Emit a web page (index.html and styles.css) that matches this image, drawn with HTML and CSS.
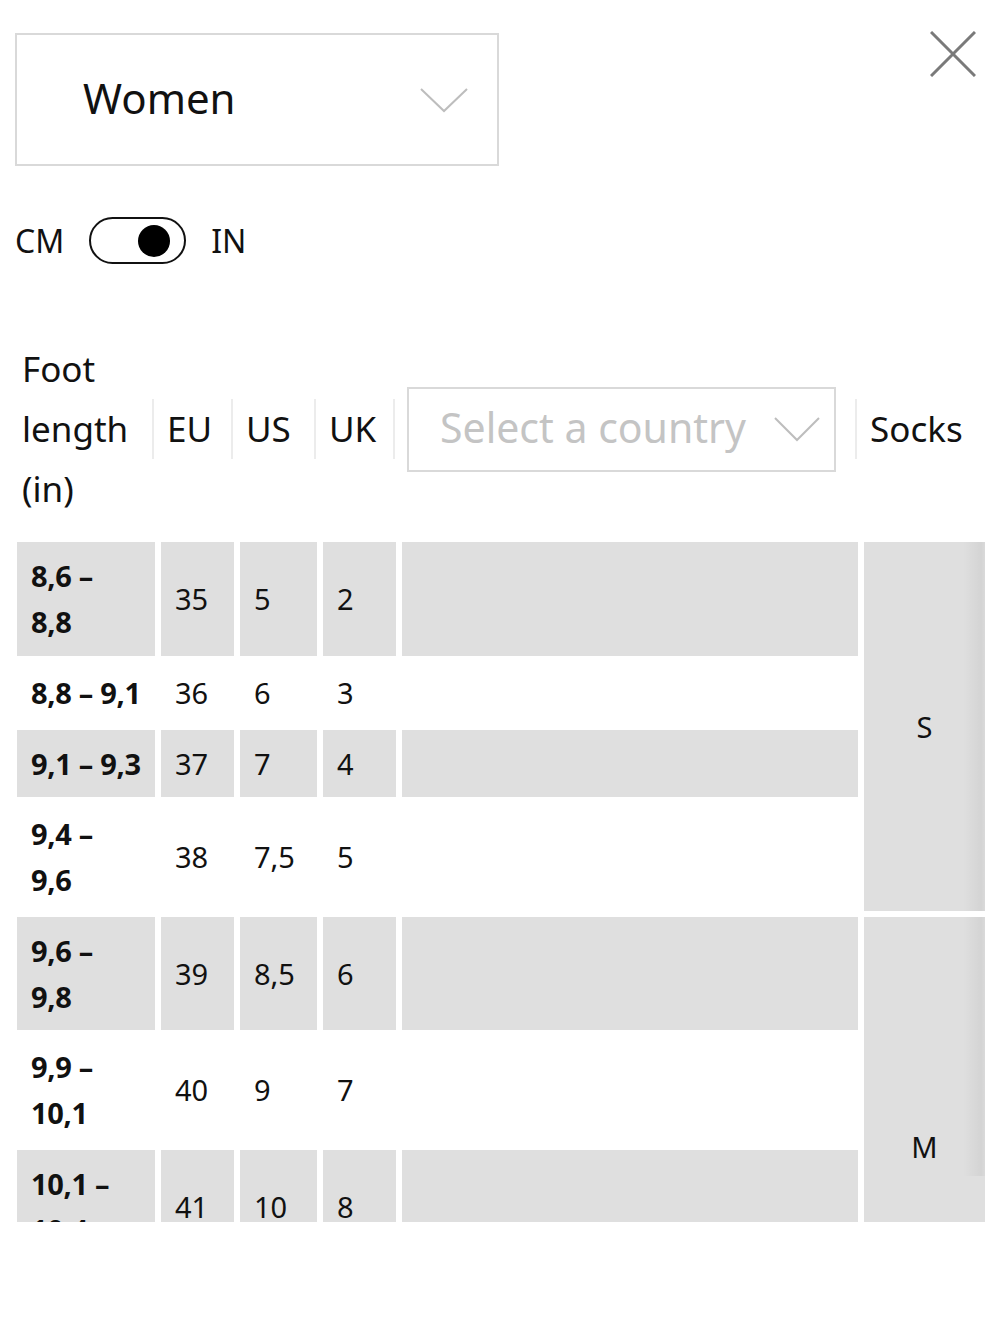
FILE: index.html
```html
<!DOCTYPE html>
<html lang="en">
<head>
<meta charset="utf-8">
<title>Size guide</title>
<link rel="stylesheet" href="styles.css">
</head>
<body>
<div class="page">
  <div class="top">
    <div class="dropdown">
      <span class="dropdown-label">Women</span>
      <svg class="chev" width="48" height="26" viewBox="0 0 48 26"><path d="M1 2 L24 24 L47 2" fill="none" stroke="#bdbdbd" stroke-width="2"/></svg>
    </div>
    <svg class="close" width="46" height="46" viewBox="0 0 46 46"><path d="M1 1 L45 45 M45 1 L1 45" stroke="#7a7a7a" stroke-width="3" fill="none"/></svg>
  </div>

  <div class="units">
    <span class="unit">CM</span>
    <span class="toggle"><span class="knob"></span></span>
    <span class="unit">IN</span>
  </div>

  <div class="grid head">
    <div class="hcell hfirst">Foot<br>length<br>(in)</div>
    <div class="hcell">EU</div>
    <div class="hcell">US</div>
    <div class="hcell">UK</div>
    <div class="hcell hselect">
      <div class="select">
        <span class="select-label">Select a country</span>
        <svg class="chev" width="46" height="26" viewBox="0 0 46 26"><path d="M1 2 L23 24 L45 2" fill="none" stroke="#bdbdbd" stroke-width="2"/></svg>
      </div>
    </div>
    <div class="hcell hlast">Socks</div>
  </div>

  <div class="scroll">
    <div class="grid body">
      <div class="c len g">8,6 –<br>8,8</div>
      <div class="c g">35</div>
      <div class="c g">5</div>
      <div class="c g">2</div>
      <div class="c g"></div>
      <div class="c sock sock-s">S</div>

      <div class="c len">8,8 – 9,1</div>
      <div class="c">36</div>
      <div class="c">6</div>
      <div class="c">3</div>
      <div class="c"></div>

      <div class="c len g">9,1 – 9,3</div>
      <div class="c g">37</div>
      <div class="c g">7</div>
      <div class="c g">4</div>
      <div class="c g"></div>

      <div class="c len">9,4 –<br>9,6</div>
      <div class="c">38</div>
      <div class="c">7,5</div>
      <div class="c">5</div>
      <div class="c"></div>

      <div class="c len g">9,6 –<br>9,8</div>
      <div class="c g">39</div>
      <div class="c g">8,5</div>
      <div class="c g">6</div>
      <div class="c g"></div>
      <div class="c sock sock-m">M</div>

      <div class="c len">9,9 –<br>10,1</div>
      <div class="c">40</div>
      <div class="c">9</div>
      <div class="c">7</div>
      <div class="c"></div>

      <div class="c len g">10,1 –<br>10,4</div>
      <div class="c g">41</div>
      <div class="c g">10</div>
      <div class="c g">8</div>
      <div class="c g"></div>
    </div>
  </div>
</div>
</body>
</html>
```

FILE: styles.css
```css
html, body {
  margin: 0;
  padding: 0;
  background: #fff;
}
body {
  font-family: "Noto Sans", "Open Sans", sans-serif;
  color: #111;
}
.page {
  padding: 0 15px;
}
.top {
  display: flex;
  justify-content: space-between;
  align-items: flex-start;
}
.dropdown {
  margin-top: 33px;
  width: 484px;
  height: 133px;
  box-sizing: border-box;
  border: 2px solid #d9d9d9;
  display: flex;
  align-items: center;
  justify-content: space-between;
  padding: 0 29px 0 66px;
}
.dropdown-label {
  font-size: 42px;
  line-height: 1;
  margin-top: -4px;
}
.close {
  margin-top: 31px;
  margin-right: 9px;
}
.units {
  margin-top: 51px;
  display: flex;
  align-items: center;
  gap: 25px;
}
.unit {
  font-size: 32px;
  line-height: 47px;
}
.toggle {
  width: 97px;
  height: 47px;
  box-sizing: border-box;
  border: 2.5px solid #111;
  border-radius: 24px;
  display: flex;
  align-items: center;
  justify-content: flex-end;
  padding-right: 14px;
}
.knob {
  width: 32px;
  height: 32px;
  border-radius: 50%;
  background: #000;
}
.grid {
  display: grid;
  grid-template-columns: 138px 73px 77px 73px 456px 121px;
  column-gap: 6px;
  margin-left: 2px;
}
.head {
  margin-top: 75px;
  height: 180px;
  align-items: center;
}
.hcell {
  position: relative;
  font-size: 35px;
  line-height: 60px;
  padding-left: 6px;
}
.hfirst {
  padding-left: 5px;
}
.hcell::after {
  content: "";
  position: absolute;
  right: 1px;
  top: 50%;
  height: 60px;
  margin-top: -30px;
  width: 2px;
  background: #ececec;
}
.hlast::after {
  display: none;
}
.hselect {
  padding-left: 5px;
}
.select {
  width: 429px;
  height: 85px;
  box-sizing: border-box;
  border: 2px solid #d9d9d9;
  display: flex;
  align-items: center;
  justify-content: space-between;
  padding: 0 14px 0 31px;
}
.select-label {
  font-size: 41px;
  line-height: 1;
  color: #c4c4c4;
  margin-top: -4px;
}
.scroll {
  margin-top: 23px;
  height: 680px;
  overflow: hidden;
}
.body {
  row-gap: 6px;
  margin-left: 2px;
  grid-template-rows: 114px 62px 67px 108px 113px 108px 113px 108px;
}
.c {
  font-size: 29px;
  line-height: 46px;
  padding: 0 14px;
  display: flex;
  align-items: center;
}
.len {
  font-weight: 700;
  white-space: nowrap;
  letter-spacing: -0.3px;
}
.g {
  background: #dfdfdf;
}
.sock {
  background-color: #dfdfdf;
  justify-content: center;
  grid-column: 6;
  background-image: linear-gradient(to right, rgba(0,0,0,0) 82%, rgba(0,0,0,0.05) 97%, rgba(0,0,0,0.025) 100%);
  background-repeat: no-repeat;
}
.sock-s {
  grid-row: 1 / span 4;
  background-size: 100% 100%;
}
.sock-m {
  grid-row: 5 / span 4;
  background-size: 100% 259px;
}
```
